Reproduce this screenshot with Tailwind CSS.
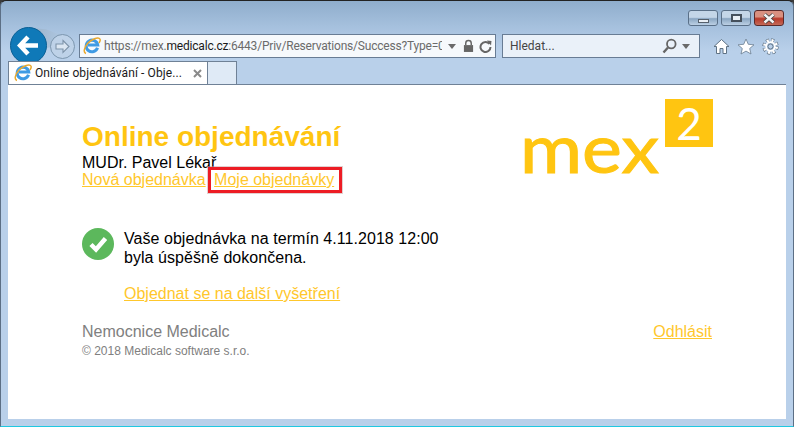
<!DOCTYPE html>
<html lang="cs">
<head>
  <meta charset="UTF-8">
  <meta name="viewport" content="width=device-width, initial-scale=1.0">
  <title>Online objednávání</title>
  <script src="https://cdn.jsdelivr.net/npm/@tailwindcss/browser@4"></script>
</head>
<body class="bg-[#3a3a3a] overflow-hidden font-['Liberation_Sans',Arial,sans-serif]">
  <div class="w-[794px] h-[427px] flex flex-col rounded-t-[6px] border-t border-t-[#222] border-x border-x-[#5c6f85] border-b border-b-[#20c8e0] bg-[linear-gradient(#8fadcc_0px,#a5c0dd_25px,#b9d0ea_50px)] overflow-hidden">

    <!-- window buttons -->
    <div class="h-[32px] flex justify-end items-start pt-[9px] pr-[9px] gap-[3px] shrink-0">
      <div class="w-[30px] h-[16px] rounded-[3px] border border-[#5a7088] bg-[linear-gradient(#c4d6e8_45%,#8aa6c2_55%,#bcd0e4)] flex items-center justify-center">
        <div class="w-[11px] h-[4px] mt-[5px] bg-[#e8eef4] border border-[#55606c]"></div>
      </div>
      <div class="w-[30px] h-[16px] rounded-[3px] border border-[#5a7088] bg-[linear-gradient(#c4d6e8_45%,#8aa6c2_55%,#bcd0e4)] flex items-center justify-center">
        <div class="w-[11px] h-[8px] bg-[#e8eef4] border-2 border-[#45505c]"></div>
      </div>
      <div class="w-[30px] h-[16px] rounded-[3px] border border-[#5a2a2a] bg-[linear-gradient(#d99080_40%,#b8392a_55%,#c46a58)] flex items-center justify-center">
        <svg width="14" height="11" viewBox="0 0 14 11"><path d="M2.500 1.500 L11.500 9.500 M11.500 1.500 L2.500 9.500" stroke="#3c3c3c" stroke-width="4"/><path d="M2.500 1.500 L11.500 9.500 M11.500 1.500 L2.500 9.500" stroke="#f4f4f4" stroke-width="2.400"/></svg>
      </div>
    </div>

    <!-- toolbar -->
    <div class="h-[26px] flex items-center shrink-0 pl-[9px] relative">
      <div class="absolute left-[29px] top-[-5px] w-[40px] h-[24px] bg-[linear-gradient(100deg,#9ab2c9,#b5cde8)] [clip-path:polygon(0_0,40%_5%,100%_45%,100%_60%,0_100%)]"></div>
      <div class="relative w-[37px] h-[37px] rounded-full bg-[#0f79b8] border border-[#0a5f94] flex items-center justify-center z-10 -mt-[2px]">
        <svg width="23" height="21" viewBox="0 0 23 21"><path d="M11 2 L3 10.500 L11 19 M3.500 10.500 H21" fill="none" stroke="#fff" stroke-width="4.500" stroke-linejoin="miter"/></svg>
      </div>
      <div class="relative w-[25px] h-[25px] ml-[3px] rounded-full border border-[#7c96ae] bg-[#bed2e8] flex items-center justify-center">
        <svg width="17" height="15" viewBox="0 0 17 15"><path d="M9 1.500 L15 7.500 L9 13.500 V10 H2 V5 H9 Z" fill="#dbe6f2" stroke="#7d93a9" stroke-width="1.100"/></svg>
      </div>
      <div class="ml-[4px] w-[417px] h-[24px] bg-[#f6f9fc] border border-[#687c94] flex items-center pl-[3px] pr-[3px]">
        <svg width="18" height="18" viewBox="0 0 18 18" class="shrink-0">
          <path d="M14.500 10.800 A5.800 5.800 0 1 1 14.700 7.900 H5" fill="none" stroke="#3f9be4" stroke-width="3"/>
          <path d="M3 16.500 C0 15.500 1 10.500 5 6 C9 2 14.500 0 16.500 1.500 C17.500 2.300 17 4.500 16 6" fill="none" stroke="#eaa92e" stroke-width="1.500"/>
        </svg>
        <div class="ml-[3px] text-[12px] font-['Roboto',sans-serif] tracking-[-0.2px] text-[#6b6b6b] whitespace-nowrap overflow-hidden w-[338px] leading-[20px]">https://mex.<span class="text-[#1a1a1a]">medicalc.cz</span>:6443/Priv/Reservations/Success?Type=0</div>
        <div class="ml-[6px] w-0 h-0 border-x-[4px] border-x-transparent border-t-[5px] border-t-[#6a6a6a]"></div>
        <svg width="11" height="14" viewBox="0 0 12 14" class="ml-[7px]"><path d="M3 6 V4 A3 3 0 0 1 9 4 V6" fill="none" stroke="#666" stroke-width="1.600"/><rect x="1" y="6" width="10" height="7.500" fill="#666"/></svg>
        <svg width="13" height="13" viewBox="0 0 13 13" class="ml-[5px]"><path d="M10.500 4 A5 5 0 1 0 11.500 7" fill="none" stroke="#666" stroke-width="2"/><path d="M8 0.500 L12.500 1 L12 5.500 Z" fill="#666"/></svg>
      </div>
      <div class="ml-[6px] w-[198px] h-[24px] bg-[#eaf1f9] border border-[#687c94] flex items-center pl-[7px] pr-[9px]">
        <span class="text-[12px] font-['Roboto',sans-serif] text-[#444]">Hledat...</span>
        <svg width="15" height="16" viewBox="0 0 15 16" class="ml-auto"><circle cx="9.300" cy="6" r="4.300" fill="none" stroke="#666" stroke-width="1.800"/><path d="M6 9.500 L1.500 14.500" stroke="#666" stroke-width="2.400"/></svg>
        <div class="ml-[5px] w-0 h-0 border-x-[4px] border-x-transparent border-t-[5px] border-t-[#6a6a6a]"></div>
      </div>
      <div class="ml-[13px] flex items-center gap-[7px]">
        <svg width="17" height="17" viewBox="0 0 17 17"><path d="M8.500 1.500 L16 8.500 H13.500 V15.500 H10 V10.500 H7 V15.500 H3.500 V8.500 H1 Z" fill="#fff" stroke="#5f7284" stroke-width="1"/></svg>
        <svg width="18" height="17" viewBox="0 0 18 17"><path d="M9 1 L11.300 6.300 L17 6.800 L12.700 10.500 L14 16 L9 13.100 L4 16 L5.300 10.500 L1 6.800 L6.700 6.300 Z" fill="#fff" stroke="#6a7d90" stroke-width="0.800"/></svg>
        <svg width="17" height="17" viewBox="0 0 17 17"><circle cx="8.500" cy="8.500" r="6" fill="none" stroke="#5f7284" stroke-width="4.400" stroke-dasharray="2.700 2"/><circle cx="8.500" cy="8.500" r="6" fill="none" stroke="#fff" stroke-width="3" stroke-dasharray="2 2.700" stroke-dashoffset="-0.350"/><circle cx="8.500" cy="8.500" r="4.300" fill="none" stroke="#fff" stroke-width="1.800"/><circle cx="8.500" cy="8.500" r="2.600" fill="#b9d0ea" stroke="#5f7284" stroke-width="1"/></svg>
      </div>
    </div>

    <!-- tab strip -->
    <div class="h-[22px] mt-[3px] flex pl-[7px] shrink-0 items-end relative z-20">
      <div class="w-[200px] h-[23px] bg-white border border-b-0 border-[#6f8196] flex items-center pl-[5px]">
        <svg width="18" height="18" viewBox="0 0 18 18" class="shrink-0">
          <path d="M14.500 10.800 A5.800 5.800 0 1 1 14.700 7.900 H5" fill="none" stroke="#3f9be4" stroke-width="3"/>
          <path d="M3 16.500 C0 15.500 1 10.500 5 6 C9 2 14.500 0 16.500 1.500 C17.500 2.300 17 4.500 16 6" fill="none" stroke="#eaa92e" stroke-width="1.500"/>
        </svg>
        <span class="ml-[3px] text-[12px] font-['Roboto',sans-serif] tracking-[0.1px] text-[#1a1a1a] whitespace-nowrap">Online objednávání - Obje...</span>
        <svg width="9" height="9" viewBox="0 0 9 9" class="ml-auto mr-[5px]"><path d="M1 1 L8 8 M8 1 L1 8" stroke="#8a8a8a" stroke-width="2"/></svg>
      </div>
      <div class="w-[29px] h-[23px] bg-[#dfeaf6] border border-l-0 border-b-0 border-[#6f8196]"></div>
    </div>

    <!-- page -->
    <div class="flex-1 mx-[7px] mb-[7px] bg-white border-t border-t-[#6f8196] pl-[74px] pr-[74px] pt-[36px] flex flex-col text-[16px] leading-[18px]">
      <div class="flex justify-between items-start relative">
        <div>
          <h1 class="text-[28px] leading-[31px] font-bold text-[#ffc511]">Online objednávání</h1>
          <div class="text-black mt-[2px]">MUDr. Pavel Lékař</div>
          <div class="whitespace-nowrap -mt-[1px]">
            <a href="#" class="text-[#ffc72c] underline">Nová objednávka</a>
            <a href="#" class="ml-[4px] text-[#ffc72c] underline relative">Moje objednávky<span class="absolute left-[-6px] right-[-8px] top-[-4px] bottom-[-5px] border-[3px] border-[#ed1c24] outline outline-[#c8a0a0]/50"></span></a>
          </div>
        </div>
        <div class="absolute right-[-1px] top-[-22px] w-[192px] h-[76px]">
          <span class="absolute left-[-1px] top-[10px] origin-left scale-x-[1.11] text-[68px] leading-[76px] font-['Lato',sans-serif] text-[#ffc511] [-webkit-text-stroke:1px_#ffc511]">mex</span>
          <div class="absolute right-0 top-0 w-[48px] h-[48px] bg-[#ffc511] flex items-center justify-center text-white text-[44px] leading-[48px] font-['Lato',sans-serif]">2</div>
        </div>
      </div>

      <div class="flex mt-[36px]">
        <svg width="32" height="32" viewBox="0 0 32 32" class="shrink-0 mt-[3px]"><circle cx="16" cy="16" r="16" fill="#5cb85c"/><path d="M9 16.500 L14 21.500 L23.500 10.500" fill="none" stroke="#fff" stroke-width="4.500"/></svg>
        <div class="ml-[10px] pt-[4px]">
          <div class="text-black leading-[19px] tracking-[0.05px]">Vaše objednávka na termín 4.11.2018 12:00<br>byla úspěšně dokončena.</div>
          <a href="#" class="block mt-[18px] text-[#ffc72c] underline">Objednat se na další vyšetření</a>
        </div>
      </div>

      <div class="flex justify-between mt-[20px]">
        <div>
          <div class="text-[#808080]">Nemocnice Medicalc</div>
          <div class="text-[#808080] text-[12px] mt-[3px] leading-[14px]">© 2018 Medicalc software s.r.o.</div>
        </div>
        <a href="#" class="text-[#ffc72c] underline">Odhlásit</a>
      </div>
    </div>
  </div>
</body>
</html>
